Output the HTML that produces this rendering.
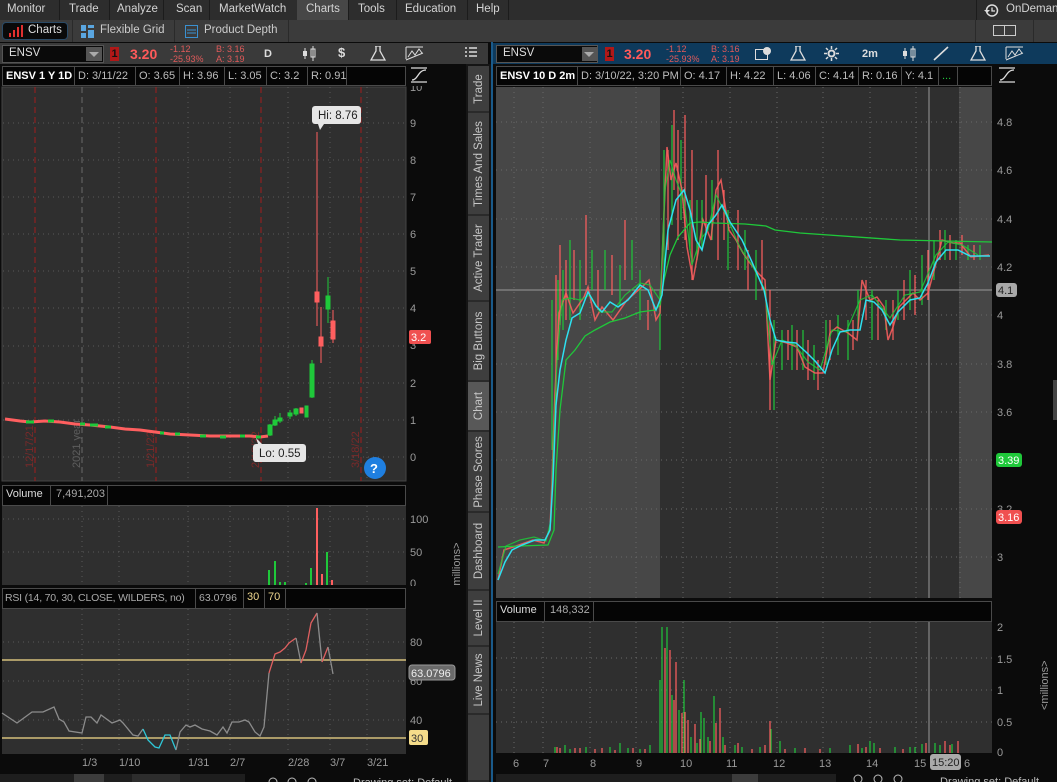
<!DOCTYPE html>
<html><head><meta charset="utf-8">
<style>
*{margin:0;padding:0;box-sizing:border-box}
body{width:1057px;height:782px;background:#0b0b0b;font-family:"Liberation Sans",sans-serif;font-size:11px;color:#cfcfcf;position:relative;overflow:hidden}
.a{position:absolute}
.menu{top:0;left:0;width:1057px;height:20px;background:#2d2d2d}
.menu span{position:absolute;top:3px;font-size:11.5px;color:#d4d4d4}
.sep{position:absolute;top:0;width:1px;height:20px;background:#1c1c1c}
.bar2{top:20px;left:0;width:1057px;height:22px;background:#3b3b3b}
.tb{height:21px;top:43px;background:#3a3a3a}
.cell{position:absolute;top:66px;height:20px;background:#050505;border:1px solid #4a4a4a;padding:3px 3px;white-space:nowrap;overflow:hidden;color:#bdbdbd;font-size:11px}
.tab{position:absolute;left:468px;width:21px;background:#3e3e3e;border-bottom:2px solid #2a2a2a}
.tab span{position:absolute;left:50%;top:50%;transform:translate(-50%,-50%) rotate(-90deg);white-space:nowrap;color:#c8c8c8;font-size:11.5px}
</style></head><body>

<div class="a menu">
<span style="left:7px">Monitor</span><div class="sep" style="left:59px"></div>
<span style="left:69px">Trade</span><div class="sep" style="left:109px"></div>
<span style="left:117px">Analyze</span><div class="sep" style="left:163px"></div>
<span style="left:176px">Scan</span><div class="sep" style="left:209px"></div>
<span style="left:219px">MarketWatch</span>
<div class="a" style="left:297px;top:0;width:51px;height:20px;background:#474747"></div>
<span style="left:306px">Charts</span><div class="sep" style="left:348px"></div>
<span style="left:358px">Tools</span><div class="sep" style="left:396px"></div>
<span style="left:405px">Education</span><div class="sep" style="left:467px"></div>
<span style="left:476px">Help</span><div class="sep" style="left:508px"></div>
<div class="sep" style="left:976px"></div>
<svg class="a" style="left:983px;top:3px" width="16" height="15"><circle cx="9" cy="7.5" r="5.5" fill="none" stroke="#ddd" stroke-width="1.5"/><path d="M9 4.5V8h3" stroke="#ddd" fill="none" stroke-width="1.3"/><path d="M1 7l3 3 3-3z" fill="#ddd"/></svg>
<span style="left:1006px">OnDemand</span>
</div>

<div class="a bar2">
<div class="a" style="left:2px;top:2px;width:66px;height:18px;background:#0a0a0a;border-radius:4px;border:1px solid #2a4a66"></div>
<svg class="a" style="left:9px;top:5px" width="14" height="12"><rect x="0" y="8" width="2" height="4" fill="#e03030"/><rect x="4" y="5" width="2" height="7" fill="#e03030"/><rect x="8" y="2" width="2" height="10" fill="#e03030"/><rect x="12" y="0" width="2" height="12" fill="#e03030"/></svg>
<span class="a" style="left:28px;top:4px;color:#ddd;font-size:11.5px">Charts</span>
<div class="a" style="left:72px;top:0;width:1px;height:22px;background:#2a2a2a"></div>
<svg class="a" style="left:81px;top:5px" width="14" height="13"><rect x="0" y="0" width="5" height="6" fill="#5aa6e0"/><rect x="7" y="0" width="6" height="3" fill="#5aa6e0"/><rect x="7" y="5" width="6" height="8" fill="#5aa6e0"/><rect x="0" y="8" width="5" height="5" fill="#5aa6e0"/></svg>
<span class="a" style="left:100px;top:4px;color:#ccc;font-size:11.5px">Flexible Grid</span>
<div class="a" style="left:174px;top:0;width:1px;height:22px;background:#2a2a2a"></div>
<svg class="a" style="left:185px;top:5px" width="13" height="13"><rect x="0.5" y="0.5" width="12" height="12" fill="none" stroke="#3a90d0"/><path d="M2 5h9M2 8h9" stroke="#3a90d0"/></svg>
<span class="a" style="left:204px;top:4px;color:#ccc;font-size:11.5px">Product Depth</span>
<div class="a" style="left:288px;top:0;width:1px;height:22px;background:#2a2a2a"></div>
<div class="a" style="left:975px;top:0;width:1px;height:22px;background:#2a2a2a"></div>
<svg class="a" style="left:993px;top:5px" width="24" height="12"><rect x="0.5" y="0.5" width="11" height="10" fill="none" stroke="#ccc"/><rect x="11.5" y="0.5" width="11" height="10" fill="none" stroke="#ccc"/></svg>
<div class="a" style="left:1033px;top:0;width:1px;height:22px;background:#2a2a2a"></div>
</div>

<!-- LEFT TOOLBAR -->
<div class="a tb" style="left:0;width:488px"></div>
<div class="a" style="left:2px;top:45px;width:102px;height:18px;background:#0a0a0a;border:1px solid #555"></div>
<span class="a" style="left:9px;top:47px;color:#ddd;font-size:11.5px">ENSV</span>
<div class="a" style="left:86px;top:47px;width:16px;height:14px;background:#555"></div>
<svg class="a" style="left:89px;top:52px" width="10" height="5"><path d="M0 0h10L5 5z" fill="#aaa"/></svg>
<div class="a" style="left:110px;top:47px;width:9px;height:14px;background:#b01818;color:#111;font-size:11px;text-align:center;line-height:14px;font-weight:bold">1</div>
<span class="a" style="left:130px;top:46px;color:#ff5a5a;font-size:14px;font-weight:bold">3.20</span>
<span class="a" style="left:170px;top:44px;color:#e05a5a;font-size:9px;line-height:10px">-1.12<br>-25.93%</span>
<span class="a" style="left:216px;top:44px;color:#e05a5a;font-size:9px;line-height:10px">B: 3.16<br>A: 3.19</span>
<span class="a" style="left:264px;top:48px;color:#ddd;font-weight:bold">D</span>
<svg class="a" style="left:302px;top:46px" width="14" height="15"><path d="M3 2v11M11 0v15" stroke="#ddd"/><rect x="1" y="5" width="4" height="5" fill="#ddd"/><rect x="9" y="3" width="4" height="8" fill="none" stroke="#ddd"/></svg>
<span class="a" style="left:338px;top:45px;color:#ddd;font-size:13px;font-weight:bold">$</span>
<svg class="a" style="left:370px;top:46px" width="16" height="15"><path d="M5 0h6M6 0v5L1 14h14L10 5V0" fill="none" stroke="#ddd" stroke-width="1.3"/></svg>
<svg class="a" style="left:405px;top:46px" width="20" height="15"><path d="M1 1h17M1 1v12M3 11l4-6 3 4 4-6 3 4M1 14l17-7" fill="none" stroke="#ddd"/></svg>
<svg class="a" style="left:465px;top:47px" width="12" height="12"><path d="M0 1h2M4 1h8M0 5h2M4 5h8M0 9h2M4 9h8" stroke="#ddd" stroke-width="1.5"/></svg>

<!-- LEFT HEADER CELLS -->
<div class="cell" style="left:2px;width:73px;color:#fff;font-weight:bold">ENSV 1 Y 1D</div>
<div class="cell" style="left:74px;width:62px">D: 3/11/22</div>
<div class="cell" style="left:135px;width:45px">O: 3.65</div>
<div class="cell" style="left:179px;width:46px">H: 3.96</div>
<div class="cell" style="left:224px;width:43px">L: 3.05</div>
<div class="cell" style="left:266px;width:42px">C: 3.2</div>
<div class="cell" style="left:307px;width:40px">R: 0.91</div>
<div class="cell" style="left:346px;width:60px"></div>
<svg class="a" style="left:410px;top:67px" width="18" height="16"><path d="M1 1h16M2 13c6 0 6-10 14-10M1 15h16" fill="none" stroke="#ddd" stroke-width="1.3"/></svg>

<!-- LEFT PRICE PLOT -->
<svg class="a" style="left:0;top:86px" width="466" height="396">
<rect x="2" y="1" width="404" height="394" fill="#2f2f2f" stroke="#444"/>
<g stroke="#5a5a5a" stroke-dasharray="1,4">
<line x1="3" y1="37" x2="406" y2="37"/><line x1="3" y1="74" x2="406" y2="74"/><line x1="3" y1="111" x2="406" y2="111"/><line x1="3" y1="148" x2="406" y2="148"/><line x1="3" y1="185" x2="406" y2="185"/><line x1="3" y1="222" x2="406" y2="222"/><line x1="3" y1="260" x2="406" y2="260"/><line x1="3" y1="297" x2="406" y2="297"/><line x1="3" y1="334" x2="406" y2="334"/><line x1="3" y1="371" x2="406" y2="371"/>
<line x1="119" y1="1" x2="119" y2="395"/><line x1="188" y1="1" x2="188" y2="395"/><line x1="230" y1="1" x2="230" y2="395"/><line x1="288" y1="1" x2="288" y2="395"/><line x1="330" y1="1" x2="330" y2="395"/><line x1="367" y1="1" x2="367" y2="395"/>
</g>
<g stroke-dasharray="6,4"><line x1="35" y1="1" x2="35" y2="395" stroke="#a01e1e"/><line x1="156" y1="1" x2="156" y2="395" stroke="#a01e1e"/><line x1="261" y1="1" x2="261" y2="395" stroke="#a01e1e"/><line x1="361" y1="1" x2="361" y2="395" stroke="#a01e1e"/><line x1="82" y1="1" x2="82" y2="395" stroke="#6a6a6a"/></g>
<g fill="#7a2a2a" font-size="11" font-family="Liberation Sans"><text transform="translate(33,382) rotate(-90)">12/17/21</text><text transform="translate(154,382) rotate(-90)">1/21/22</text><text transform="translate(259,382) rotate(-90)">2/18/22</text><text transform="translate(359,382) rotate(-90)">3/18/22</text><text transform="translate(80,382) rotate(-90)" fill="#5e5e5e">2021 year</text></g>
<path d="M5 333L20 335L30 336L45 335L60 336L75 338L90 339L110 341L125 343L140 344L155 346L170 348L190 349L210 350L230 350L250 350L260 351L268 350" stroke="#ff5f5f" stroke-width="3" fill="none"/>
<g stroke="#1fc83a" stroke-width="3"><path d="M26 336h8M48 335h6M80 338h5M90 339h8M105 341h6M160 347h4M175 348h5M200 350h6M220 351h6M240 350h5M256 351h5"/></g>
<g stroke="#1fc83a" fill="#1fc83a">
<line x1="270" y1="338" x2="270" y2="350"/><rect x="268" y="339" width="4" height="10"/>
<line x1="275" y1="330" x2="275" y2="340"/><rect x="273" y="334" width="4" height="5"/>
<line x1="280" y1="327" x2="280" y2="337"/><rect x="278" y="332" width="4" height="3"/>
<line x1="290" y1="324" x2="290" y2="333"/><rect x="288" y="327" width="4" height="3"/>
<line x1="296" y1="322" x2="296" y2="330"/><rect x="294" y="323" width="4" height="5"/>
<rect x="305" y="320" width="3" height="11"/>
<line x1="312" y1="274" x2="312" y2="312"/><rect x="310" y="278" width="4" height="33"/>
<line x1="328" y1="191" x2="328" y2="237"/><rect x="326" y="210" width="4" height="13"/>
</g>
<g stroke="#ff5f5f" fill="#ff5f5f">
<rect x="300" y="322" width="3" height="5"/>
<line x1="317" y1="46" x2="317" y2="240"/><rect x="315" y="206" width="4" height="10"/>
<line x1="321" y1="221" x2="321" y2="277"/><rect x="319" y="251" width="4" height="9"/>
<line x1="333" y1="224" x2="333" y2="257"/><rect x="331" y="235" width="4" height="18"/>
</g>
<rect x="312" y="20" width="49" height="18" rx="3" fill="#e6e6e6"/><path d="M318 38l2 6 4-6z" fill="#e6e6e6"/>
<text x="318" y="33" font-size="11.5" fill="#222" font-family="Liberation Sans">Hi: 8.76</text>
<rect x="253" y="358" width="53" height="18" rx="3" fill="#e6e6e6"/><path d="M258 358l-2-6 6 6z" fill="#e6e6e6"/>
<text x="259" y="371" font-size="11.5" fill="#222" font-family="Liberation Sans">Lo: 0.55</text>
<circle cx="375" cy="382" r="11" fill="#1f7fe0"/><text x="370" y="387" font-size="13" font-weight="bold" fill="#fff" font-family="Liberation Sans">?</text>
<g fill="#9a9a9a" font-size="11" font-family="Liberation Sans">
<text x="410" y="5">10</text><text x="410" y="41">9</text><text x="410" y="78">8</text><text x="410" y="115">7</text><text x="410" y="152">6</text><text x="410" y="189">5</text><text x="410" y="226">4</text><text x="410" y="263">3</text><text x="410" y="301">2</text><text x="410" y="338">1</text><text x="410" y="375">0</text></g>
<rect x="409" y="244" width="22" height="14" rx="2" fill="#f05050"/><text x="411" y="255" font-size="11" fill="#fff" font-family="Liberation Sans">3.2</text>
</svg>

<!-- LEFT VOLUME -->
<div class="a" style="left:2px;top:485px;width:404px;height:21px;background:#050505;border:1px solid #4a4a4a"></div>
<div class="a" style="left:2px;top:485px;width:49px;height:21px;border-right:1px solid #4a4a4a;color:#ddd;font-size:11px;padding:3px 4px">Volume</div>
<span class="a" style="left:56px;top:488px;color:#aaa;font-size:11px">7,491,203</span>
<div class="a" style="left:107px;top:485px;width:1px;height:21px;background:#4a4a4a"></div>
<svg class="a" style="left:0;top:506px" width="466" height="80">
<rect x="2" y="0" width="404" height="79" fill="#2f2f2f"/>
<g stroke="#5a5a5a" stroke-dasharray="1,4"><line x1="3" y1="13" x2="406" y2="13"/><line x1="3" y1="46" x2="406" y2="46"/><line x1="82" y1="0" x2="82" y2="79"/><line x1="119" y1="0" x2="119" y2="79"/><line x1="188" y1="0" x2="188" y2="79"/><line x1="230" y1="0" x2="230" y2="79"/><line x1="288" y1="0" x2="288" y2="79"/><line x1="330" y1="0" x2="330" y2="79"/><line x1="367" y1="0" x2="367" y2="79"/></g>
<g fill="#1fc83a"><rect x="268" y="64" width="2" height="15"/><rect x="274" y="55" width="2" height="24"/><rect x="279" y="76" width="2" height="3"/><rect x="284" y="76" width="2" height="3"/><rect x="310" y="62" width="2" height="17"/><rect x="326" y="46" width="2" height="33"/><rect x="305" y="77" width="2" height="2"/></g>
<g fill="#ff5f5f"><rect x="316" y="2" width="2" height="77"/><rect x="321" y="68" width="2" height="11"/><rect x="331" y="74" width="2" height="5"/></g>
<g fill="#9a9a9a" font-size="11" font-family="Liberation Sans"><text x="410" y="17">100</text><text x="410" y="50">50</text><text x="410" y="81">0</text></g>
<text transform="translate(460,86) rotate(-90)" fill="#9a9a9a" font-size="11" font-family="Liberation Sans">&lt;millions&gt;</text>
</svg>

<!-- RSI -->
<div class="a" style="left:2px;top:588px;width:404px;height:21px;background:#050505;border:1px solid #4a4a4a"></div>
<span class="a" style="left:5px;top:592px;color:#aaa;font-size:10.5px;letter-spacing:-0.2px">RSI (14, 70, 30, CLOSE, WILDERS, no)</span>
<div class="a" style="left:195px;top:588px;width:1px;height:21px;background:#4a4a4a"></div>
<span class="a" style="left:199px;top:592px;color:#aaa;font-size:10.5px">63.0796</span>
<div class="a" style="left:243px;top:588px;width:1px;height:21px;background:#4a4a4a"></div>
<span class="a" style="left:247px;top:591px;color:#f0d890;font-size:11px">30</span>
<div class="a" style="left:264px;top:588px;width:1px;height:21px;background:#4a4a4a"></div>
<span class="a" style="left:268px;top:591px;color:#f0d890;font-size:11px">70</span>
<div class="a" style="left:285px;top:588px;width:1px;height:21px;background:#4a4a4a"></div>
<svg class="a" style="left:0;top:608px" width="466" height="174">
<rect x="2" y="1" width="404" height="145" fill="#2f2f2f"/>
<g stroke="#5a5a5a" stroke-dasharray="1,4"><line x1="3" y1="34" x2="406" y2="34"/><line x1="3" y1="73" x2="406" y2="73"/><line x1="3" y1="112" x2="406" y2="112"/><line x1="82" y1="1" x2="82" y2="146"/><line x1="119" y1="1" x2="119" y2="146"/><line x1="188" y1="1" x2="188" y2="146"/><line x1="230" y1="1" x2="230" y2="146"/><line x1="288" y1="1" x2="288" y2="146"/><line x1="330" y1="1" x2="330" y2="146"/><line x1="367" y1="1" x2="367" y2="146"/></g>
<line x1="2" y1="52" x2="406" y2="52" stroke="#f5dc8a" stroke-width="1.3"/>
<line x1="2" y1="130" x2="406" y2="130" stroke="#f5dc8a" stroke-width="1.3"/>
<g fill="none" stroke-width="1.3" transform="translate(0,-608)">
<polyline stroke="#8c8c8c" points="2,713 17,723 32,712 43,712 54,707 59,719 64,722 69,731 82,733 86,717 91,717 97,723 101,715 112,723 120,720 123,723 133,735 138,736 143,729"/>
<polyline stroke="#2ec8d8" points="143,729 148,740 155,747 159,748 165,735 170,735 176,750"/>
<polyline stroke="#8c8c8c" points="176,750 180,732 186,725 190,727 195,725 202,729 210,731 217,735 223,727 227,733 232,722 239,722 245,720 249,722 255,732 260,736 264,727 269,673"/>
<polyline stroke="#e06060" points="269,673 275,654 280,652 285,648 289,643 296,638"/>
<polyline stroke="#8c8c8c" points="296,638 301,663"/>
<polyline stroke="#e06060" points="301,663 306,650 311,623 317,613"/>
<polyline stroke="#8c8c8c" points="317,613 322,662"/>
<polyline stroke="#e06060" points="322,662 328,647"/>
<polyline stroke="#8c8c8c" points="328,647 333,674"/>
</g>
<g fill="#9a9a9a" font-size="11" font-family="Liberation Sans"><text x="410" y="38">80</text><text x="410" y="77">60</text><text x="410" y="116">40</text></g>
<rect x="409" y="57" width="46" height="15" rx="3" fill="#6a6a6a" stroke="#999"/><text x="411" y="69" font-size="11" fill="#eee" font-family="Liberation Sans">63.0796</text>
<rect x="409" y="122" width="19" height="15" rx="2" fill="#f5dc8a"/><text x="411" y="134" font-size="11" fill="#333" font-family="Liberation Sans">30</text>
<g fill="#9a9a9a" font-size="11" font-family="Liberation Sans"><text x="82" y="158">1/3</text><text x="119" y="158">1/10</text><text x="188" y="158">1/31</text><text x="230" y="158">2/7</text><text x="288" y="158">2/28</text><text x="330" y="158">3/7</text><text x="367" y="158">3/21</text></g>
<rect x="0" y="166" width="245" height="8" fill="#1e1e1e"/><rect x="74" y="166" width="30" height="8" fill="#3c3c3c"/><rect x="132" y="166" width="48" height="8" fill="#2d2d2d"/>
<text x="353" y="178" font-size="11" fill="#bbb" font-family="Liberation Sans">Drawing set: Default</text>
<g stroke="#bbb" fill="none"><circle cx="273" cy="174" r="4"/><circle cx="292" cy="174" r="4"/><circle cx="312" cy="174" r="4"/></g>
</svg>

<!-- SIDE TABS -->
<div class="a" style="left:466px;top:64px;width:25px;height:718px;background:#151515"></div>
<div class="tab" style="top:66px;height:47px"><span>Trade</span></div>
<div class="tab" style="top:113px;height:103px"><span>Times And Sales</span></div>
<div class="tab" style="top:216px;height:86px"><span>Active Trader</span></div>
<div class="tab" style="top:302px;height:80px"><span>Big Buttons</span></div>
<div class="tab" style="top:382px;height:50px;background:#585858"><span>Chart</span></div>
<div class="tab" style="top:432px;height:81px"><span>Phase Scores</span></div>
<div class="tab" style="top:513px;height:78px"><span>Dashboard</span></div>
<div class="tab" style="top:591px;height:56px"><span>Level II</span></div>
<div class="tab" style="top:647px;height:68px"><span>Live News</span></div>
<div class="tab" style="top:715px;height:67px"></div>

<!-- RIGHT PANEL -->
<div class="a" style="left:491px;top:42px;width:2px;height:740px;background:#1a5a8a"></div>
<div class="a" style="left:493px;top:43px;width:564px;height:21px;background:#0e3a5c"></div>
<div class="a" style="left:496px;top:45px;width:102px;height:18px;background:#0a0a0a;border:1px solid #555"></div>
<span class="a" style="left:503px;top:47px;color:#ddd;font-size:11.5px">ENSV</span>
<div class="a" style="left:582px;top:47px;width:15px;height:14px;background:#555"></div>
<svg class="a" style="left:584px;top:52px" width="10" height="5"><path d="M0 0h10L5 5z" fill="#aaa"/></svg>
<div class="a" style="left:605px;top:47px;width:9px;height:14px;background:#b01818;color:#111;font-size:11px;text-align:center;line-height:14px;font-weight:bold">1</div>
<span class="a" style="left:624px;top:46px;color:#ff5a5a;font-size:14px;font-weight:bold">3.20</span>
<span class="a" style="left:666px;top:44px;color:#e05a5a;font-size:9px;line-height:10px">-1.12<br>-25.93%</span>
<span class="a" style="left:711px;top:44px;color:#e05a5a;font-size:9px;line-height:10px">B: 3.16<br>A: 3.19</span>
<svg class="a" style="left:755px;top:47px" width="16" height="14"><rect x="0.5" y="2.5" width="12" height="10" fill="none" stroke="#ddd"/><circle cx="12" cy="4" r="4" fill="#ddd"/></svg>
<svg class="a" style="left:790px;top:46px" width="16" height="15"><path d="M5 0h6M6 0v5L1 14h14L10 5V0" fill="none" stroke="#ddd" stroke-width="1.3"/></svg>
<svg class="a" style="left:824px;top:46px" width="15" height="15"><circle cx="7.5" cy="7.5" r="3" fill="none" stroke="#ddd" stroke-width="2"/><path d="M7.5 0v3M7.5 12v3M0 7.5h3M12 7.5h3M2 2l2 2M11 11l2 2M2 13l2-2M11 4l2-2" stroke="#ddd" stroke-width="1.5"/></svg>
<span class="a" style="left:862px;top:48px;color:#ddd;font-weight:bold">2m</span>
<svg class="a" style="left:902px;top:46px" width="14" height="15"><path d="M3 2v11M11 0v15" stroke="#ddd"/><rect x="1" y="5" width="4" height="5" fill="#ddd"/><rect x="9" y="3" width="4" height="8" fill="none" stroke="#ddd"/></svg>
<svg class="a" style="left:933px;top:46px" width="16" height="15"><path d="M1 14L15 1" stroke="#ddd" stroke-width="1.6"/></svg>
<svg class="a" style="left:970px;top:46px" width="16" height="15"><path d="M5 0h6M6 0v5L1 14h14L10 5V0" fill="none" stroke="#ddd" stroke-width="1.3"/></svg>
<svg class="a" style="left:1005px;top:46px" width="20" height="15"><path d="M1 1h17M1 1v12M3 11l4-6 3 4 4-6 3 4M1 14l17-7" fill="none" stroke="#ddd"/></svg>
<div class="cell" style="left:496px;width:82px;color:#fff;font-weight:bold">ENSV 10 D 2m</div>
<div class="cell" style="left:577px;width:104px">D: 3/10/22, 3:20 PM</div>
<div class="cell" style="left:680px;width:47px">O: 4.17</div>
<div class="cell" style="left:726px;width:48px">H: 4.22</div>
<div class="cell" style="left:773px;width:43px">L: 4.06</div>
<div class="cell" style="left:815px;width:44px">C: 4.14</div>
<div class="cell" style="left:858px;width:44px">R: 0.16</div>
<div class="cell" style="left:901px;width:38px">Y: 4.1</div>
<div class="cell" style="left:938px;width:20px;color:#1fc83a">...</div>
<div class="cell" style="left:957px;width:35px"></div>
<svg class="a" style="left:998px;top:67px" width="18" height="16"><path d="M1 1h16M2 13c6 0 6-10 14-10M1 15h16" fill="none" stroke="#ddd" stroke-width="1.3"/></svg>

<svg class="a" style="left:0;top:0" width="1057" height="782">
<rect x="496" y="87" width="164" height="511" fill="#474747"/>
<rect x="660" y="87" width="299" height="511" fill="#2f2f2f"/>
<rect x="959" y="87" width="33" height="511" fill="#474747"/>
<g stroke="#6a6a6a" stroke-dasharray="1,4">
<line x1="496" y1="122" x2="992" y2="122"/><line x1="496" y1="170" x2="992" y2="170"/><line x1="496" y1="219" x2="992" y2="219"/><line x1="496" y1="267" x2="992" y2="267"/><line x1="496" y1="315" x2="992" y2="315"/><line x1="496" y1="364" x2="992" y2="364"/><line x1="496" y1="412" x2="992" y2="412"/><line x1="496" y1="460" x2="992" y2="460"/><line x1="496" y1="509" x2="992" y2="509"/><line x1="496" y1="557" x2="992" y2="557"/>
<line x1="514" y1="87" x2="514" y2="598"/><line x1="543" y1="87" x2="543" y2="598"/><line x1="590" y1="87" x2="590" y2="598"/><line x1="636" y1="87" x2="636" y2="598"/><line x1="683" y1="87" x2="683" y2="598"/><line x1="730" y1="87" x2="730" y2="598"/><line x1="777" y1="87" x2="777" y2="598"/><line x1="823" y1="87" x2="823" y2="598"/><line x1="870" y1="87" x2="870" y2="598"/><line x1="916" y1="87" x2="916" y2="598"/><line x1="960" y1="87" x2="960" y2="598"/>
</g>
<line x1="929" y1="87" x2="929" y2="598" stroke="#999"/>
<line x1="496" y1="290" x2="992" y2="290" stroke="#9a9a9a"/>
<g stroke="#ff5f5f" stroke-width="1.2">
<path d="M556 275v130M560 245v80M566 260v60M574 250v50M586 215v70M598 270v40M612 255v40M625 220v60M648 300v30M668 150v100M674 110v80M678 130v110M685 115v125M692 150v130M706 175v60M718 150v110M724 190v50M738 210v60M748 250v40M762 240v50M770 290v120M788 330v30M797 330v40M808 340v40M818 360v30M830 320v40M853 320v30M866 280v40M878 300v40M893 300v40M904 280v40M915 275v40M928 250v50M940 230v30M950 235v25M962 235v20M974 245v15"/>
</g>
<g stroke="#1fc83a" stroke-width="1.2">
<path d="M552 300v150M558 280v80M563 270v60M570 240v80M580 260v60M592 250v40M605 250v40M620 265v40M632 240v40M640 270v50M660 290v60M664 150v120M672 125v100M681 140v80M690 200v50M697 200v60M702 200v50M712 180v60M728 210v60M745 230v40M756 250v50M774 320v90M782 330v40M792 325v45M803 330v40M814 345v35M826 320v45M838 315v40M848 320v40M858 290v40M872 290v50M886 300v30M898 290v30M910 270v40M922 255v50M934 240v40M945 230v30M956 240v20M968 245v15M980 245v15"/>
</g>
<polyline fill="none" stroke="#ff5f5f" stroke-width="1.5" opacity="0.85" points="498,580 504,550 519,545 533,540 544,543 550,530 552,480 555,393 559,313 566,293 573,313 584,297 588,287 595,320 602,307 613,320 627,300 642,287 649,280 656,320 660,313 664,213 667,147 671,180 676,163 682,190 687,247 693,280 698,253 703,220 711,240 716,190 721,180 729,230 736,240 743,253 750,263 758,273 765,280 770,380 776,340 787,343 797,347 805,367 815,373 823,373 830,333 837,327 848,333 857,340 862,280 870,300 877,297 884,307 888,340 893,327 899,307 913,293 920,300 928,293 935,267 942,240 953,243 960,243 971,257 989,255"/>
<polyline fill="none" stroke="#1fc83a" stroke-width="1.2" opacity="0.85" points="498,574 506,546 520,540 534,537 546,541 551,520 553,460 557,360 562,300 570,298 580,300 590,295 600,312 612,312 625,295 640,283 650,285 660,300 665,190 670,160 676,180 684,200 692,265 700,240 708,230 716,195 726,215 740,248 752,265 765,290 772,365 782,340 795,345 808,362 820,370 832,330 846,332 860,300 872,295 890,318 905,295 920,292 936,255 948,242 962,245 978,255"/>
<polyline fill="none" stroke="#1fc83a" stroke-width="1.3" points="498,547 520,546 548,545 554,530 556,470 560,410 566,360 575,350 585,336 595,330 610,322 625,318 640,312 655,310 660,305 664,280 670,255 678,237 690,223 700,222 715,223 745,224 766,226 775,230 800,233 900,240 992,242"/>
<polyline fill="none" stroke="#2ee0f0" stroke-width="1.5" points="498,580 505,562 512,550 522,545 535,540 545,540 550,530 553,480 556,405 560,370 566,340 572,318 580,313 588,292 596,306 602,312 610,302 618,307 628,300 640,285 648,290 656,310 662,295 668,230 676,200 684,190 690,210 696,240 702,250 708,225 716,215 722,205 730,222 742,240 752,262 764,290 770,320 776,340 786,342 796,343 806,352 816,362 825,373 832,350 840,332 850,330 860,330 866,300 874,302 882,310 890,325 898,312 910,300 920,298 928,283 936,262 946,250 958,250 970,256 990,256"/>
<g fill="#9a9a9a" font-size="11" font-family="Liberation Sans">
<text x="997" y="126">4.8</text><text x="997" y="174">4.6</text><text x="997" y="223">4.4</text><text x="997" y="271">4.2</text><text x="997" y="319">4</text><text x="997" y="368">3.8</text><text x="997" y="416">3.6</text><text x="997" y="513">3.2</text><text x="997" y="561">3</text></g>
<rect x="996" y="283" width="21" height="14" rx="3" fill="#a8a8a8"/><text x="998" y="294" font-size="11" fill="#222" font-family="Liberation Sans">4.1</text>
<rect x="996" y="453" width="26" height="14" rx="3" fill="#1fc83a"/><text x="998" y="464" font-size="11" fill="#fff" font-family="Liberation Sans">3.39</text>
<rect x="996" y="510" width="26" height="14" rx="3" fill="#f05050"/><text x="998" y="521" font-size="11" fill="#fff" font-family="Liberation Sans">3.16</text>
<rect x="1053" y="380" width="4" height="40" fill="#444"/>
</svg>

<!-- RIGHT VOLUME -->
<div class="a" style="left:496px;top:601px;width:496px;height:21px;background:#050505;border:1px solid #4a4a4a"></div>
<div class="a" style="left:496px;top:601px;width:49px;height:21px;border-right:1px solid #4a4a4a;color:#ddd;font-size:11px;padding:3px 4px">Volume</div>
<span class="a" style="left:550px;top:604px;color:#aaa;font-size:11px">148,332</span>
<div class="a" style="left:593px;top:601px;width:1px;height:21px;background:#4a4a4a"></div>
<svg class="a" style="left:0;top:0" width="1057" height="782">
<rect x="496" y="622" width="496" height="131" fill="#2f2f2f"/>
<g stroke="#6a6a6a" stroke-dasharray="1,4"><line x1="496" y1="658" x2="992" y2="658"/><line x1="496" y1="690" x2="992" y2="690"/><line x1="496" y1="722" x2="992" y2="722"/><line x1="514" y1="622" x2="514" y2="753"/><line x1="543" y1="622" x2="543" y2="753"/><line x1="590" y1="622" x2="590" y2="753"/><line x1="636" y1="622" x2="636" y2="753"/><line x1="683" y1="622" x2="683" y2="753"/><line x1="730" y1="622" x2="730" y2="753"/><line x1="777" y1="622" x2="777" y2="753"/><line x1="823" y1="622" x2="823" y2="753"/><line x1="870" y1="622" x2="870" y2="753"/><line x1="916" y1="622" x2="916" y2="753"/></g>
<line x1="929" y1="622" x2="929" y2="753" stroke="#999"/>
<g stroke="#1fc83a" stroke-width="1.2"><path d="M660 753v-73M662 753v-126M667 753v-126M672 753v-58M679 753v-43M684 753v-73M691 753v-16M701 753v-41M704 753v-35M714 753v-57M723 753v-16M771 753v-24M555 753v-6M565 753v-8M570 753v-4M586 753v-6M610 753v-6M620 753v-10M628 753v-5M640 753v-4M650 753v-8M697 753v-10M708 753v-16M735 753v-8M742 753v-6M760 753v-6M780 753v-12M795 753v-5M830 753v-5M850 753v-8M862 753v-5M870 753v-12M874 753v-10M895 753v-6M910 753v-6M915 753v-6M922 753v-9M935 753v-10M940 753v-8M952 753v-9"/></g>
<g stroke="#ff5f5f" stroke-width="1.2"><path d="M665 753v-105M670 753v-103M674 753v-53M676 753v-91M682 753v-40M685 753v-41M688 753v-33M695 753v-29M716 753v-30M720 753v-45M770 753v-32M557 753v-6M560 753v-5M575 753v-5M580 753v-5M595 753v-4M602 753v-5M615 753v-3M633 753v-5M645 753v-4M700 753v-14M710 753v-12M725 753v-8M738 753v-10M752 753v-4M765 753v-8M785 753v-4M805 753v-5M820 753v-4M858 753v-9M866 753v-6M880 753v-5M903 753v-4M926 753v-10M945 753v-12M950 753v-8M958 753v-12"/></g>
<g fill="#9a9a9a" font-size="11" font-family="Liberation Sans"><text x="997" y="631">2</text><text x="997" y="663">1.5</text><text x="997" y="694">1</text><text x="997" y="726">0.5</text><text x="997" y="756">0</text></g>
<text transform="translate(1048,710) rotate(-90)" fill="#9a9a9a" font-size="11" font-family="Liberation Sans">&lt;millions&gt;</text>
<g fill="#9a9a9a" font-size="11" font-family="Liberation Sans"><text x="513" y="767">6</text><text x="543" y="767">7</text><text x="590" y="767">8</text><text x="636" y="767">9</text><text x="680" y="767">10</text><text x="726" y="767">11</text><text x="773" y="767">12</text><text x="819" y="767">13</text><text x="866" y="767">14</text><text x="914" y="767">15</text><text x="964" y="767">6</text></g>
<rect x="930" y="754" width="31" height="16" rx="3" fill="#aaa"/><text x="932" y="766" font-size="11" fill="#222" font-family="Liberation Sans">15:20</text>
<rect x="496" y="774" width="340" height="8" fill="#1e1e1e"/><rect x="732" y="774" width="26" height="8" fill="#3c3c3c"/>
<text x="940" y="785" font-size="11" fill="#bbb" font-family="Liberation Sans">Drawing set: Default</text>
<g stroke="#bbb" fill="none"><circle cx="858" cy="779" r="4"/><circle cx="878" cy="779" r="4"/><circle cx="898" cy="779" r="4"/></g>
</svg>
</body></html>
